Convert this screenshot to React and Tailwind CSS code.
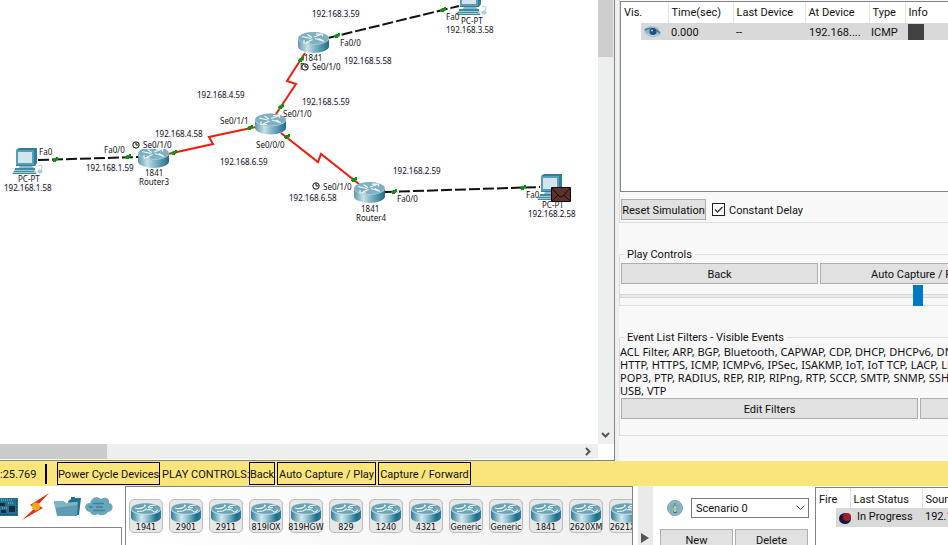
import React from 'react';

function Router({ className }) {
  return (
    <svg viewBox="0 0 31 21" className={className} aria-hidden="true">
      <defs>
        <linearGradient id="routerBody" x1="0" x2="1">
          <stop offset="0" stopColor="#5b9ab0" />
          <stop offset="0.3" stopColor="#c9e0e8" />
          <stop offset="0.5" stopColor="#8dbccb" />
          <stop offset="1" stopColor="#1c6d8b" />
        </linearGradient>
      </defs>
      <path d="M0 6.500v8C0 18 7 21 15.500 21S31 18 31 14.500v-8z" fill="url(#routerBody)" />
      <ellipse cx="15.500" cy="6.500" rx="15.500" ry="6.500" fill="#a9cbd7" />
      <ellipse cx="15.500" cy="6" rx="15" ry="6" fill="#7fb0c2" />
      <g fill="none" stroke="#eef6f9" strokeWidth="1.200">
        <path d="M4 4.500L13 6.500M9.500 2.500L14 5.500" />
        <path d="M17 6.500L25 9M21 6.500L26 9.500" />
        <path d="M16 5L23 2.500M18 2.200H24.500V4.500" />
        <path d="M14.500 7.500L8 10.500M6 8V11H12" />
      </g>
    </svg>
  );
}

function ModelIcon() {
  return (
    <svg viewBox="0 0 30 20" className="h-5 w-[30px] shrink-0" aria-hidden="true">
      <defs>
        <linearGradient id="modelBody" x1="0" x2="1">
          <stop offset="0" stopColor="#2d7d99" />
          <stop offset="0.35" stopColor="#d3e7ed" />
          <stop offset="0.5" stopColor="#a3cbd7" />
          <stop offset="0.85" stopColor="#1a6f8e" />
          <stop offset="1" stopColor="#2d7d99" />
        </linearGradient>
      </defs>
      <path d="M0 6v8.500C0 17.500 7 20 15 20S30 17.500 30 14.500V6z" fill="url(#modelBody)" />
      <ellipse cx="15" cy="6" rx="15" ry="6" fill="#c2dbe4" />
      <ellipse cx="15" cy="5.500" rx="14.500" ry="5.300" fill="#69a3b8" />
      <g fill="none" stroke="#f1f8fa" strokeWidth="1.100">
        <path d="M4 5Q8 6.500 12 4.500T13 2" />
        <path d="M6 8.500L12 8Q14.500 7 15.500 5.500" />
        <path d="M17 4.500L19.500 2.500L25 2M22 4.500L17.500 5" />
        <path d="M15.500 7Q20 5.500 22 8T27 6.500" />
      </g>
    </svg>
  );
}

function Pc({ className }) {
  return (
    <svg viewBox="0 0 31 27" className={className} aria-hidden="true">
      <path d="M4 2l3-2h18v15l-2 3H4z" fill="#2d7f9b" />
      <path d="M4 2h18v15H4z" fill="#5b9db3" />
      <path d="M6 4h14v11H6z" fill="#d3e5ec" />
      <path d="M8 18h12l3 3H6z" fill="#8bb8c8" />
      <path d="M3 20h20v2H3z" fill="#3f88a1" />
      <path d="M2 22h21l2 4H0z" fill="#a9cbd8" />
      <path d="M2 23.500h20M1 25.500h23" stroke="#3f88a1" />
      <path d="M26 18q4-2 4 1t-3 4" fill="none" stroke="#a9cbd8" />
      <ellipse cx="28" cy="23.500" rx="2.500" ry="2" fill="#a9cbd8" />
    </svg>
  );
}

function Clock({ className }) {
  return (
    <svg viewBox="0 0 8 8" className={className} aria-hidden="true">
      <circle cx="4" cy="4" r="3.200" fill="#fff" stroke="#111" />
      <path d="M4 1.500V4h2.300" fill="none" stroke="#111" />
    </svg>
  );
}

const labels = [
  ['192.168.3.59', 'left-[312px] top-[9px]', true],
  ['PC-PT', 'left-[461px] top-[16px]'],
  ['Fa0', 'left-[446px] top-[12px]'],
  ['192.168.3.58', 'left-[446px] top-[25px]'],
  ['Fa0/0', 'left-[340px] top-[38px]'],
  ['192.168.5.58', 'left-[344px] top-[56px]', true],
  ['Se0/1/0', 'left-[312px] top-[62px]', true],
  ['192.168.4.59', 'left-[197px] top-[90px]', true],
  ['192.168.5.59', 'left-[302px] top-[97px]', true],
  ['Se0/1/0', 'left-[283px] top-[109px]'],
  ['Se0/1/1', 'left-[220px] top-[116px]'],
  ['192.168.4.58', 'left-[155px] top-[129px]', true],
  ['Se0/1/0', 'left-[143px] top-[140px]', true],
  ['Fa0/0', 'left-[104px] top-[145px]'],
  ['Fa0', 'left-[39px] top-[147px]'],
  ['192.168.1.59', 'left-[86px] top-[163px]', true],
  ['1841', 'left-[145px] top-[168px]'],
  ['Router3', 'left-[139px] top-[177px]'],
  ['PC-PT', 'left-[18px] top-[174px]'],
  ['192.168.1.58', 'left-[4px] top-[183px]', true],
  ['192.168.6.59', 'left-[220px] top-[157px]', true],
  ['Se0/0/0', 'left-[256px] top-[140px]'],
  ['192.168.2.59', 'left-[393px] top-[166px]', true],
  ['Se0/1/0', 'left-[323px] top-[182px]'],
  ['192.168.6.58', 'left-[289px] top-[193px]', true],
  ['1841', 'left-[361px] top-[204px]'],
  ['Router4', 'left-[356px] top-[213px]'],
  ['Fa0/0', 'left-[397px] top-[194px]'],
  ['Fa0', 'left-[526px] top-[190px]'],
  ['PC-PT', 'left-[542px] top-[200px]'],
  ['192.168.2.58', 'left-[528px] top-[209px]', true],
];

const ports = [[337, 36], [443, 10], [301, 60], [281, 107], [250, 128], [174, 153], [128, 157], [55, 160], [287, 137], [354, 180], [394, 192], [523, 188]];

function Workspace() {
  return (
    <section className="flex w-[615px] shrink-0 flex-col border-r border-b border-[#82848c] bg-white">
      <div className="flex min-h-0 flex-1">
        <div className="relative flex-1 overflow-hidden font-['Noto_Sans',sans-serif] text-[8px] leading-[9px] text-[#111]">
          <svg className="absolute inset-0 h-full w-full" aria-hidden="true">
            <g fill="none" stroke="#111" strokeWidth="2" strokeDasharray="11 3">
              <path d="M38 160L139 157" />
              <path d="M328 38L459 6" />
              <path d="M385 192L540 187" />
            </g>
            <g fill="none" stroke="#f21c0a" strokeWidth="2">
              <path d="M168 154L213 144L209 137L256 127" />
              <path d="M276 114L296 84L287 81L305 53" />
              <path d="M281 133L318 162L321 154L359 184" />
            </g>
            <g fill="#0c930c">
              {ports.map(([x, y]) => (
                <path key={`${x}-${y}`} d={`M${x - 3} ${y}l2-2h2v-1h2v3l-2 1v1h-3v-1h-1z`} />
              ))}
            </g>
          </svg>
          <span className="absolute left-[304px] top-[53px]">1841</span>
          <span className="absolute left-[300px] top-[62px]">R</span>
          <Router className="absolute left-[298px] top-[32px] h-[21px] w-[31px]" />
          <Router className="absolute left-[255px] top-[113px] h-[22px] w-[31px]" />
          <Router className="absolute left-[138px] top-[147px] h-[21px] w-[31px]" />
          <Router className="absolute left-[354px] top-[182px] h-[21px] w-[31px]" />
          <Pc className="absolute left-[12px] top-[148px] h-[27px] w-[31px]" />
          <Pc className="absolute left-[456px] top-[-11px] h-[27px] w-[31px]" />
          <Pc className="absolute left-[537px] top-[174px] h-[27px] w-[31px]" />
          {labels.map(([text, place, tinted]) => (
            <span key={place} className={`absolute whitespace-nowrap ${place} ${tinted ? 'bg-[#f9f8fe]' : ''}`}>
              {text}
            </span>
          ))}
          <Clock className="absolute left-[301px] top-[63px] size-2" />
          <Clock className="absolute left-[132px] top-[141px] size-2" />
          <Clock className="absolute left-[312px] top-[182px] size-2" />
          <svg viewBox="0 0 20 15" className="absolute left-[551px] top-[187px] h-[15px] w-5" aria-hidden="true">
            <path d="M.5.5h19v14H.5z" fill="#5c302c" stroke="#120808" />
            <path d="M1 1l7 8q2 2 4 0l7-8M1 14l6-6M19 14l-6-6" fill="none" stroke="#1d0c0a" />
          </svg>
        </div>
        <div className="flex w-4 flex-col justify-between bg-[#edeeee]">
          <div className="h-[57px] w-[15px] bg-[#cdcdcd]" />
          <svg viewBox="0 0 15 18" className="h-[18px] w-[15px]" fill="none" stroke="#555" strokeWidth="2" aria-hidden="true">
            <path d="M4 7l3.500 3.500L11 7" />
          </svg>
        </div>
      </div>
      <div className="flex h-4 items-start justify-between">
        <div className="flex h-[15px] w-[598px] justify-between bg-[#edefee]">
          <div className="w-[107px] bg-[#cbcbcb]" />
          <svg viewBox="0 0 18 15" className="h-[15px] w-[18px]" fill="none" stroke="#555" strokeWidth="2" aria-hidden="true">
            <path d="M6 4l3.500 3.500L6 11" />
          </svg>
        </div>
      </div>
    </section>
  );
}

function PushButton({ className, children }) {
  return (
    <button type="button" className={`h-[21px] border border-[#adadad] bg-[#e1e1e1] pt-px leading-none whitespace-nowrap ${className}`}>
      {children}
    </button>
  );
}

function SimulationPanel() {
  return (
    <aside className="min-w-0 flex-1 overflow-hidden border-l-4 border-[#f0f0f0] bg-[#f8f8f8]">
      <div className="w-[598px]">
        <div className="h-[223px] border-b border-l border-[#dcdcdc] pt-px">
          <div className="h-[191px] border border-[#82848c] bg-white">
            <table className="w-full table-fixed border-collapse text-left">
              <thead>
                <tr className="h-[21px]">
                  <th className="w-[20px] pl-[3px] font-normal whitespace-nowrap">Vis.</th>
                  <th className="w-[27px] border-r border-[#e2e2e2]" aria-label="Visible" />
                  <th className="w-[65px] border-r border-[#e2e2e2] pl-[3px] font-normal">Time(sec)</th>
                  <th className="w-[72px] border-r border-[#e2e2e2] pl-[3px] font-normal">Last Device</th>
                  <th className="w-[64px] border-r border-[#e2e2e2] pl-[3px] font-normal">At Device</th>
                  <th className="w-[36px] border-r border-[#e2e2e2] pl-[3px] font-normal">Type</th>
                  <th className="pl-[3px] font-normal">Info</th>
                </tr>
              </thead>
              <tbody>
                <tr className="h-[17px]">
                  <td />
                  <td className="bg-[#d9d9d9] pl-[3px]">
                    <svg viewBox="0 0 17 12" className="block h-3 w-[17px]" aria-hidden="true">
                      <path d="M0 3Q7-2 14 2L17 8Q11 13 4 10Q1 8 0 3z" fill="#8fbccd" />
                      <path d="M1 4Q8 0 16 7" fill="none" stroke="#477c9a" strokeWidth="1.500" />
                      <circle cx="9" cy="5.500" r="3.500" fill="#294a7c" />
                      <circle cx="8" cy="4.500" r="1" fill="#b5cce4" />
                      <path d="M2 8q5 3 12 1" fill="none" stroke="#b9d8e3" />
                    </svg>
                  </td>
                  <td className="bg-[#d9d9d9] pt-px pl-[3px]">0.000</td>
                  <td className="bg-[#d9d9d9] pt-px pl-[3px]">--</td>
                  <td className="bg-[#d9d9d9] pt-px pl-[4px] whitespace-nowrap">192.168....</td>
                  <td className="bg-[#d9d9d9] pt-px pl-[2px]">ICMP</td>
                  <td className="bg-[#d9d9d9] pl-[3px]"><div className="size-4 bg-[#414145]" /></td>
                </tr>
              </tbody>
            </table>
          </div>
          <div className="flex items-center gap-[6px] pt-[7px] pl-px">
            <PushButton className="w-[85px]">Reset Simulation</PushButton>
            <label className="flex items-center gap-1">
              <span className="relative flex size-[13px]">
                <input type="checkbox" defaultChecked className="peer size-[13px] appearance-none border border-[#222] bg-white" />
                <svg viewBox="0 0 13 13" className="pointer-events-none absolute inset-0 hidden size-[13px] peer-checked:block" fill="none" stroke="#333" strokeWidth="1.300" aria-hidden="true">
                  <path d="M3 6.500l2.500 2.500L10.500 4" />
                </svg>
              </span>
              <span className="pt-px">Constant Delay</span>
            </label>
          </div>
        </div>

        <fieldset className="mt-[24px] h-[59px] border border-t-0 border-[#dcdcdc]">
          <legend className="flex w-full items-center gap-[3px] leading-[15px] before:h-px before:w-1 before:bg-[#dcdcdc] after:h-px after:flex-1 after:bg-[#dcdcdc]">Play Controls</legend>
          <div className="flex gap-[2px] pt-px pl-px">
            <PushButton className="w-[197px]">Back</PushButton>
            <PushButton className="w-[197px]">Auto Capture / Play</PushButton>
            <PushButton className="w-[197px]">Capture / Forward</PushButton>
          </div>
          <input
            type="range"
            aria-label="Play speed"
            defaultValue="50"
            className="mt-px block h-[21px] w-full appearance-none bg-transparent [&::-webkit-slider-runnable-track]:h-1 [&::-webkit-slider-runnable-track]:border [&::-webkit-slider-runnable-track]:border-[#d6d6d6] [&::-webkit-slider-runnable-track]:bg-[#e7eaea] [&::-webkit-slider-thumb]:mt-[-10px] [&::-webkit-slider-thumb]:h-[21px] [&::-webkit-slider-thumb]:w-[10px] [&::-webkit-slider-thumb]:appearance-none [&::-webkit-slider-thumb]:bg-[#0078c8]"
          />
        </fieldset>

        <fieldset className="mt-[24px] h-[106px] border border-t-0 border-[#dcdcdc]">
          <legend className="flex w-full items-center gap-[3px] leading-[15px] before:h-px before:w-1 before:bg-[#dcdcdc] after:h-px after:flex-1 after:bg-[#dcdcdc]">Event List Filters - Visible Events</legend>
          <p className="font-['Noto_Sans',sans-serif] leading-[13px] whitespace-nowrap">
            ACL Filter, ARP, BGP, Bluetooth, CAPWAP, CDP, DHCP, DHCPv6, DNS, DTP,<br />
            HTTP, HTTPS, ICMP, ICMPv6, IPSec, ISAKMP, IoT, IoT TCP, LACP, LLDP,<br />
            POP3, PTP, RADIUS, REP, RIP, RIPng, RTP, SCCP, SMTP, SNMP, SSH, STP,<br />
            USB, VTP
          </p>
          <div className="flex gap-[2px] pt-px pl-px">
            <PushButton className="w-[297px]">Edit Filters</PushButton>
            <PushButton className="w-[297px]">Show All/None</PushButton>
          </div>
        </fieldset>
      </div>
    </aside>
  );
}

function BarButton({ className, children }) {
  return (
    <button type="button" className={`h-[23px] border border-black pt-[2px] leading-none whitespace-nowrap ${className}`}>
      {children}
    </button>
  );
}

function ControlBar() {
  return (
    <div className="flex h-[25px] shrink-0 items-center overflow-hidden bg-[#fae57b]">
      <span className="w-[45px] pt-[2px]">:25.769</span>
      <span className="mr-[10px] h-5 w-[2px] bg-black" />
      <div className="flex items-center gap-[2px]">
        <BarButton className="w-[103px]">Power Cycle Devices</BarButton>
        <span className="w-[85px] pt-[2px] whitespace-nowrap">PLAY CONTROLS:</span>
        <BarButton className="w-[26px]">Back</BarButton>
        <BarButton className="w-[99px]">Auto Capture / Play</BarButton>
        <BarButton className="w-[93px]">Capture / Forward</BarButton>
      </div>
    </div>
  );
}

const models = ['1941', '2901', '2911', '819IOX', '819HGW', '829', '1240', '4321', 'Generic', 'Generic', '1841', '2620XM', '2621XM'];

function DevicePalette() {
  return (
    <>
      <div className="flex w-[122px] shrink-0 flex-col">
        <div className="flex h-[41px] items-center gap-1">
          <svg viewBox="0 0 18 18" className="h-[18px] w-[18px]" aria-hidden="true">
            <path d="M0 0h18v18H0z" fill="#23708f" />
            <path d="M0 5h5v3H0zM9 8h6v6H9zM1 12h5v3H1z" fill="#1c2b3a" />
            <path d="M1 2h12M8 5h6M2 10h5" stroke="#8cc6d8" strokeDasharray="1 1" />
            <path d="M0 16.500h17M16.500 2v12" stroke="#14506b" strokeDasharray="2 1" />
          </svg>
          <svg viewBox="0 0 27 27" className="h-[27px] w-[27px]" aria-hidden="true">
            <path d="M27 0L8 12l5 3L0 27l21-12-5-3z" fill="#ee2a12" />
            <circle cx="14" cy="13.500" r="4" fill="#f5a623" />
          </svg>
          <svg viewBox="0 0 27 20" className="ml-px h-5 w-[27px]" aria-hidden="true">
            <path d="M14 4l3-2V0h4v1h6l-2 17h-6z" fill="#1f7391" />
            <path d="M0 4h9l3 2 11-1h1l-1 14H3z" fill="#5d9db4" />
            <path d="M0 4h9l3 2 11-1v3L1 11z" fill="#7fb3c5" />
          </svg>
          <svg viewBox="0 0 28 19" className="h-[19px] w-7" aria-hidden="true">
            <path d="M5 15C-2 14-1 6 5 6C7 0 12-1 16 2C21-1 25 2 24 6C29 7 29 14 23 15C20 19 15 19 13 17C10 19 6 18 5 15z" fill="#6aa6bb" />
            <path d="M8 6.500h11M11 10h7M4 10h4M8 13.500h12" stroke="#3a829c" strokeWidth="1.500" />
          </svg>
        </div>
        <div className="flex-1 border-t border-r border-[#82848c]" />
      </div>
      <div className="ml-[3px] flex w-[508px] shrink-0 gap-[6px] overflow-hidden border-t border-x border-[#82848c] bg-linear-to-r from-white to-[#f0f0f0] pt-3 pl-[3px]">
        {models.map((model, i) => (
          <button key={i} type="button" className="flex h-[34px] w-[34px] shrink-0 flex-col items-center rounded-[5px] border border-[#bcbcbc] bg-[#e6e7e7] pt-[3px] font-['DejaVu_Sans',sans-serif] text-[8px] leading-[10px]">
            <ModelIcon />
            <span className="whitespace-nowrap">{model}</span>
          </button>
        ))}
      </div>
    </>
  );
}

function ScenarioPanel() {
  return (
    <>
      <div className="ml-[5px] flex w-[15px] shrink-0 items-start bg-[#eaeaea] pt-[47px] pl-[3px]">
        <svg viewBox="0 0 8 10" className="h-[10px] w-2" aria-hidden="true"><path d="M0 0l8 5-8 5z" fill="#555" /></svg>
      </div>
      <div className="w-[162px] shrink-0 pt-3 pl-[7px]">
        <div className="flex items-center">
          <svg viewBox="0 0 16 16" className="mx-[7px] size-4" aria-hidden="true">
            <circle cx="8" cy="8" r="7.500" fill="#8fbfd0" stroke="#8799a0" />
            <circle cx="8" cy="8" r="6" fill="#7db3c6" />
            <path d="M6.500 6.500H8V12M6.500 12h3M7 4h2" fill="none" stroke="#4b6b76" strokeWidth="2" />
            <path d="M8 6v6M7.500 4h1" fill="none" stroke="#fbe48a" strokeWidth="1.500" />
          </svg>
          <div className="relative ml-px">
            <select aria-label="Scenario" className="block h-5 w-[118px] appearance-none border border-[#777] bg-white pt-px pl-1">
              <option>Scenario 0</option>
            </select>
            <svg viewBox="0 0 9 6" className="pointer-events-none absolute top-[7px] right-1 h-[6px] w-[9px]" fill="none" stroke="#444" aria-hidden="true"><path d="M.5.5l4 4 4-4" /></svg>
          </div>
        </div>
        <div className="flex gap-[2px] pt-[11px]">
          <PushButton className="w-[73px]">New</PushButton>
          <PushButton className="w-[73px]">Delete</PushButton>
        </div>
      </div>
      <div className="mt-px min-w-0 flex-1 overflow-hidden border-t border-l border-[#82848c] bg-white">
        <table className="w-[400px] table-fixed border-collapse text-left">
          <thead>
            <tr className="h-[20px]">
              <th className="w-[20px] pt-[3px] pl-[3px] font-normal whitespace-nowrap">Fire</th>
              <th className="w-[14px] border-r border-[#e2e2e2]" aria-label="Indicator" />
              <th className="w-[72px] border-r border-[#e2e2e2] pt-[3px] pl-[3px] font-normal">Last Status</th>
              <th className="pt-[3px] pl-[3px] font-normal">Source</th>
            </tr>
          </thead>
          <tbody>
            <tr className="h-[19px]">
              <td />
              <td className="bg-[#d9d9d9] pl-[3px]">
                <svg viewBox="0 0 12 12" className="block size-3" aria-hidden="true">
                  <ellipse cx="6" cy="6.500" rx="6" ry="5.500" fill="#14173a" />
                  <ellipse cx="8" cy="5" rx="4" ry="4" fill="#a31c2c" />
                </svg>
              </td>
              <td className="bg-[#d9d9d9] pb-[2px] pl-[7px] whitespace-nowrap">In Progress</td>
              <td className="bg-[#d9d9d9] pb-[2px] pl-[3px]">192.168.1.58</td>
            </tr>
          </tbody>
        </table>
      </div>
    </>
  );
}

export default function App() {
  return (
    <main className="flex h-screen flex-col overflow-hidden bg-white font-[Roboto,sans-serif] text-[11px] leading-[15px] text-[#101010]">
      <div className="flex min-h-0 flex-1">
        <Workspace />
        <SimulationPanel />
      </div>
      <ControlBar />
      <div className="flex h-[59px] shrink-0 overflow-hidden">
        <DevicePalette />
        <ScenarioPanel />
      </div>
    </main>
  );
}
